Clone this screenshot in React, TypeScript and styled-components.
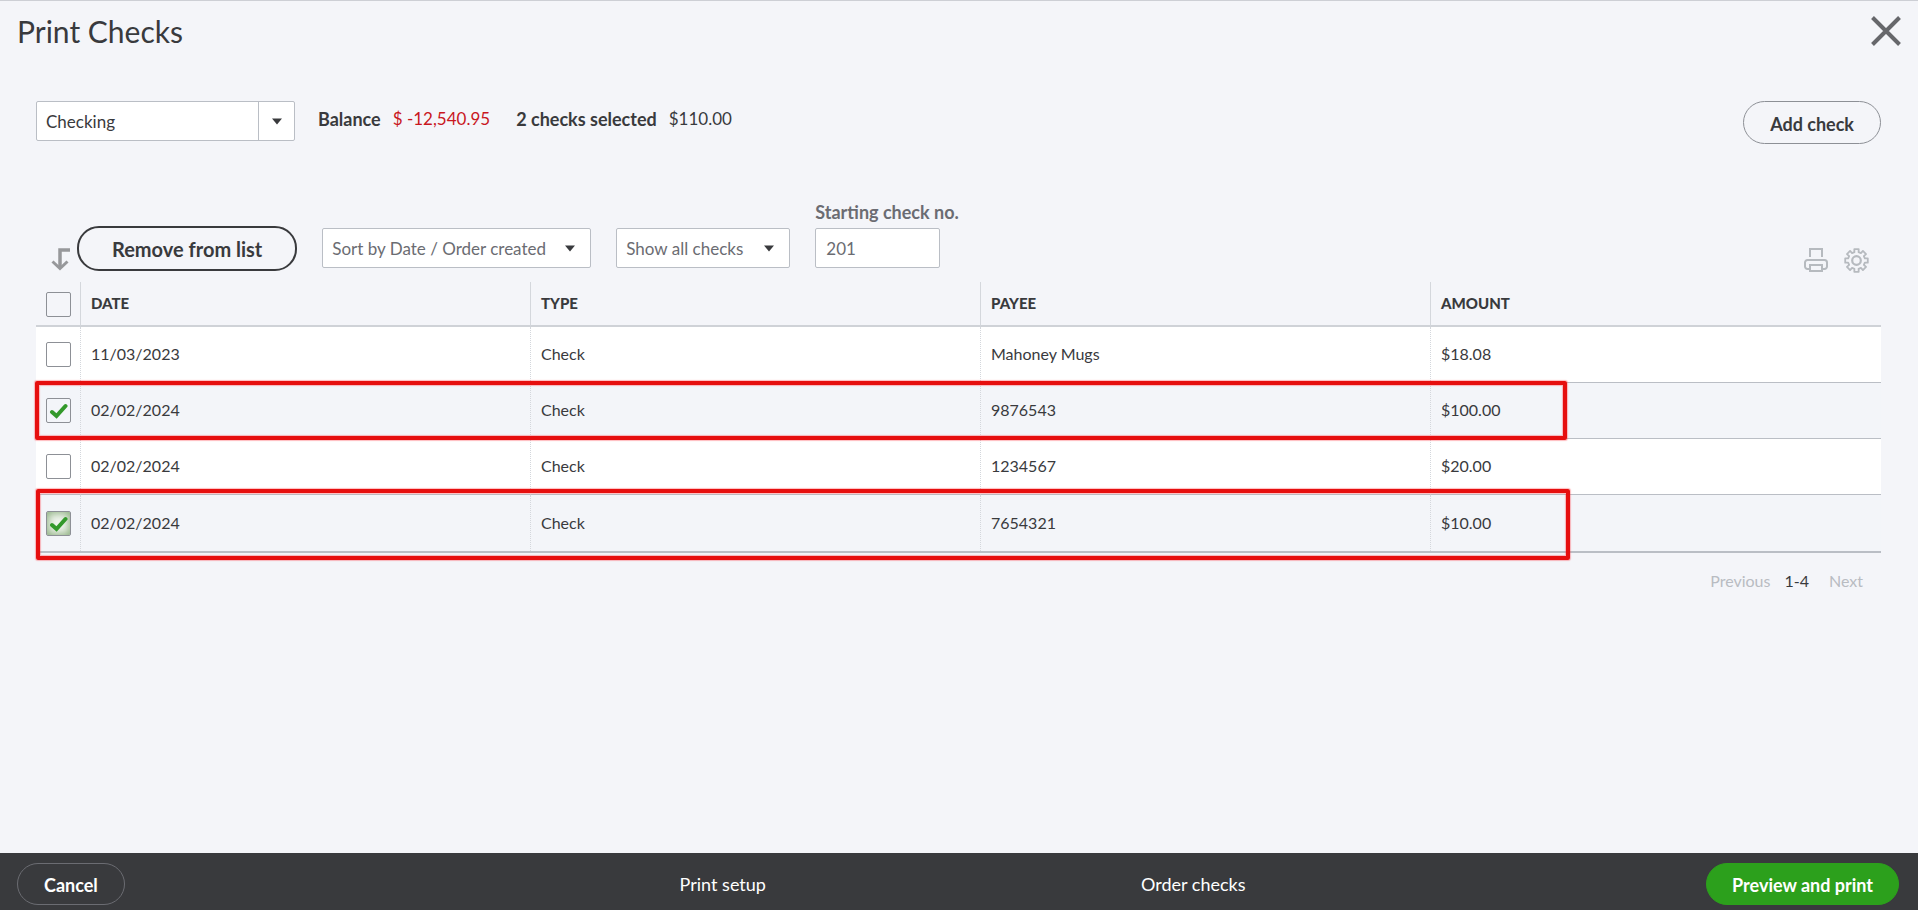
import React, { useState } from 'react';
import styled, { createGlobalStyle } from 'styled-components';

const ink = '#393a3d';
const muted = '#6b6c72';
const line = '#babec5';
const canvas = '#f4f5f9';

const GlobalStyle = createGlobalStyle`
  *, *::before, *::after { box-sizing: border-box; }
  body { margin: 0; background: ${canvas}; }
  body, button, input, select { font-family: Lato, "Liberation Sans", sans-serif; }
`;

const Page = styled.div`
  min-height: 100vh;
  display: flex;
  flex-direction: column;
  border-top: 1px solid #cdcfd5;
  background: ${canvas};
  color: ${ink};
  font-size: 17px;
  line-height: 24px;
`;

const Header = styled.header`
  display: flex;
  align-items: flex-start;
  justify-content: space-between;
  height: 100px;
  padding: 12px 16px 0 17px;
`;

const Title = styled.h1`
  margin: 0;
  font-size: 30px;
  font-weight: 400;
  line-height: 36px;
`;

const IconButton = styled.button<{ $tone?: string }>`
  display: block;
  padding: 0;
  border: 0;
  background: none;
  color: ${(p) => p.$tone ?? '#b6babf'};
  cursor: pointer;

  svg { display: block; }
`;

const Main = styled.main`
  flex: 1;
  padding: 0 37px 0 36px;
`;

const AccountBar = styled.section`
  display: flex;
  align-items: flex-start;
`;

const SelectBox = styled.span<{ $width: number }>`
  display: grid;
  width: ${(p) => p.$width}px;
  height: 40px;

  > * { grid-area: 1 / 1; }
`;

const Select = styled.select<{ $tone?: string }>`
  appearance: none;
  width: 100%;
  height: 40px;
  padding: 1px 36px 0 9px;
  border: 1px solid ${line};
  border-radius: 2px;
  background: #fff;
  color: ${(p) => p.$tone ?? muted};
  font-size: 17px;
`;

const CaretCell = styled.span<{ $divided?: boolean }>`
  display: grid;
  place-items: center;
  justify-self: end;
  width: ${(p) => (p.$divided ? 37 : 43)}px;
  border-left: ${(p) => (p.$divided ? `1px solid ${line}` : 'none')};
  margin: 1px 0;
  pointer-events: none;
`;

const Totals = styled.dl`
  display: flex;
  margin: 6px 0 0 23px;
`;

const Term = styled.dt`
  font-size: 18px;
  font-weight: 700;
`;

const Amount = styled.dd<{ $negative?: boolean }>`
  margin: 0 26px 0 12px;
  color: ${(p) => (p.$negative ? '#c9171e' : ink)};
`;

const PillButton = styled.button<{ $kind: 'outline' | 'strong' | 'dark' | 'primary' }>`
  height: ${(p) => (p.$kind === 'strong' ? 45 : p.$kind === 'outline' ? 43 : 42)}px;
  padding: ${(p) => ({ outline: '2px 26px 0', strong: '0 33px', dark: '2px 26px 0', primary: '2px 25px 0' })[p.$kind]};
  border: ${(p) =>
    ({ outline: '1px solid #8d9096', strong: `2px solid ${ink}`, dark: '1px solid #6b6c72', primary: '1px solid #2ca01c' })[p.$kind]};
  border-radius: 22px;
  background: ${(p) => (p.$kind === 'primary' ? '#2ca01c' : 'transparent')};
  color: ${(p) => (p.$kind === 'dark' || p.$kind === 'primary' ? '#fff' : ink)};
  font-size: ${(p) => (p.$kind === 'strong' ? 20 : 18)}px;
  font-weight: 700;
  white-space: nowrap;
  cursor: pointer;
`;

const PushRight = styled.div`
  margin-left: auto;
`;

const Toolbar = styled.section`
  display: flex;
  align-items: flex-end;
  margin-top: 56px;
  padding-bottom: 14px;
`;

const ArrowSlot = styled.span`
  width: 41px;
  margin-bottom: -3px;
  padding-left: 15px;

  svg { display: block; }
`;

const ListAction = styled.div`
  margin: 0 25px -3px 0;
`;

const FilterSlot = styled.div`
  margin-right: 25px;
  height: 40px;
`;

const Field = styled.label`
  display: flex;
  flex-direction: column;
  color: ${muted};
  font-size: 18px;
  font-weight: 700;
`;

const NumberBox = styled.input`
  width: 125px;
  height: 40px;
  margin-top: 4px;
  padding: 0 10px;
  border: 1px solid ${line};
  border-radius: 2px;
  background: #fff;
  color: ${muted};
  font-size: 17px;
`;

const Tools = styled.div`
  display: flex;
  gap: 15px;
  margin: 0 12px -5px auto;
`;

const TableArea = styled.div`
  position: relative;
`;

const Table = styled.table`
  width: 100%;
  table-layout: fixed;
  border-collapse: separate;
  border-spacing: 0;
  border-bottom: 2px solid ${line};
  font-size: 16px;
`;

const HeadCell = styled.th<{ $check?: boolean }>`
  width: ${(p) => (p.$check ? '45px' : 'auto')};
  height: 45px;
  padding: ${(p) => (p.$check ? '2px 0 0 10px' : '0 10px 2px')};
  border-right: 1px solid #d4d7dc;
  border-bottom: 2px solid #cfd2d7;
  text-align: left;
  font-size: 15px;
  font-weight: 900;

  &:last-child { border-right: 0; }
`;

const BodyRow = styled.tr<{ $selected: boolean }>`
  height: 56px;
  background: ${(p) => (p.$selected ? '#f3f5f9' : '#fff')};
`;

const Cell = styled.td<{ $check?: boolean }>`
  padding: ${(p) => (p.$check ? '0 0 0 10px' : '0 10px 2px')};
  border-right: 1px dotted #d4d7dc;
  border-bottom: 1px solid ${line};

  &:last-child { border-right: 0; }
  tr:last-child > & { border-bottom: 0; padding-bottom: 0; }
`;

const TickLabel = styled.label`
  display: grid;
  width: 25px;
  height: 25px;

  > * { grid-area: 1 / 1; }
  > svg { place-self: center; pointer-events: none; display: none; }
  > input:checked + svg { display: block; }
`;

const Tick = styled.input<{ $focused?: boolean }>`
  appearance: none;
  width: 25px;
  height: 25px;
  margin: 0;
  border: 1px solid #8d9096;
  border-radius: 2px;
  background: ${(p) => (p.$focused ? '#f0f4ee' : 'transparent')};
  box-shadow: ${(p) => (p.$focused ? 'inset 0 0 8px 1px #86ab78' : 'none')};
`;

const Highlight = styled.div<{ $top: number; $height: number; $left: number; $right: number }>`
  position: absolute;
  top: ${(p) => p.$top}px;
  height: ${(p) => p.$height}px;
  left: ${(p) => p.$left}px;
  right: ${(p) => p.$right}px;
  border: 4px solid #e60f0f;
  border-radius: 2px;
  box-shadow: 0 0 1px 1px rgba(255, 60, 70, 0.35), inset 0 0 1px 1px rgba(255, 60, 70, 0.35);
  pointer-events: none;
`;

const Pager = styled.nav`
  display: flex;
  justify-content: flex-end;
  margin-top: 16px;
  padding-right: 18px;
  font-size: 16px;
`;

const PageButton = styled.button`
  padding: 0;
  border: 0;
  background: none;
  color: #b9bcc2;
  font-size: 16px;
  line-height: 24px;
`;

const PageRange = styled.span`
  margin: 0 20px 0 14px;
`;

const Footer = styled.footer`
  display: grid;
  grid-template-columns: 1fr 50% 1fr;
  align-items: center;
  height: 57px;
  padding: 4px 19px 0 17px;
  background: ${ink};
`;

const FooterLinks = styled.div`
  display: grid;
  grid-template-columns: 1fr 1fr;
  justify-items: center;
`;

const FooterLink = styled.a`
  color: #fff;
  font-size: 18px;
  text-decoration: none;
`;

const FooterEnd = styled.div`
  justify-self: end;
`;

const Caret = () => (
  <svg width="10" height="7" viewBox="0 0 10 7" aria-hidden="true">
    <path d="M0 0.5H10L5 6.5Z" fill={ink} />
  </svg>
);

const CheckBox = ({ label, checked, focused, onChange }: { label: string; checked: boolean; focused?: boolean; onChange: () => void }) => (
  <TickLabel>
    <Tick type="checkbox" aria-label={label} checked={checked} $focused={focused && checked} onChange={onChange} />
    <svg width="19" height="17" viewBox="0 0 19 17" aria-hidden="true">
      <path d="M3 10L7.5 14L16.5 4" fill="none" stroke="#33992b" strokeWidth="4" strokeLinecap="round" />
    </svg>
  </TickLabel>
);

const GearIcon = () => {
  const teeth = 8;
  const points: string[] = [];
  const at = (deg: number, r: number) => {
    const a = (deg * Math.PI) / 180;
    return `${(12.5 + r * Math.cos(a)).toFixed(2)} ${(12.5 + r * Math.sin(a)).toFixed(2)}`;
  };
  for (let i = 0; i < teeth; i += 1) {
    const mid = (360 / teeth) * i - 90;
    points.push(at(mid - 14, 8.6), at(mid - 11, 11.5), at(mid + 11, 11.5), at(mid + 14, 8.6));
  }
  return (
    <svg width="25" height="25" viewBox="0 0 25 25" fill="none" stroke="currentColor" aria-hidden="true">
      <path d={`M${points.join('L')}Z`} strokeWidth="1.8" strokeLinejoin="round" />
      <circle cx="12.5" cy="12.5" r="4.3" strokeWidth="2.2" />
    </svg>
  );
};

const checks = [
  { date: '11/03/2023', payee: 'Mahoney Mugs', amount: '$18.08', selected: false },
  { date: '02/02/2024', payee: '9876543', amount: '$100.00', selected: true },
  { date: '02/02/2024', payee: '1234567', amount: '$20.00', selected: false },
  { date: '02/02/2024', payee: '7654321', amount: '$10.00', selected: true },
];

export default function App() {
  const [picked, setPicked] = useState(checks.map((c) => c.selected));
  const [startNo, setStartNo] = useState('201');
  const all = picked.every(Boolean);
  const toggle = (index: number) => setPicked(picked.map((p, i) => (i === index ? !p : p)));

  return (
    <Page>
      <GlobalStyle />
      <Header>
        <Title>Print Checks</Title>
        <IconButton type="button" aria-label="Close" $tone="#66676b">
          <svg width="32" height="36" viewBox="0 0 32 36" aria-hidden="true">
            <path d="M2.5 4.5L29.5 31.5M29.5 4.5L2.5 31.5" stroke="currentColor" strokeWidth="4" />
          </svg>
        </IconButton>
      </Header>

      <Main>
        <AccountBar>
          <SelectBox $width={259}>
            <Select aria-label="Account" $tone={ink}>
              <option>Checking</option>
            </Select>
            <CaretCell $divided><Caret /></CaretCell>
          </SelectBox>
          <Totals>
            <Term>Balance</Term>
            <Amount $negative>$ -12,540.95</Amount>
            <Term>2 checks selected</Term>
            <Amount>$110.00</Amount>
          </Totals>
          <PushRight>
            <PillButton type="button" $kind="outline">Add check</PillButton>
          </PushRight>
        </AccountBar>

        <Toolbar>
          <ArrowSlot>
            <svg width="20" height="24" viewBox="0 0 20 24" fill="none" stroke="#97989b" aria-hidden="true">
              <path d="M19 3H9V20" strokeWidth="3.5" />
              <path d="M1.5 14.5L9 21.5L16.5 14.5" strokeWidth="3" />
            </svg>
          </ArrowSlot>
          <ListAction>
            <PillButton type="button" $kind="strong">Remove from list</PillButton>
          </ListAction>
          <FilterSlot>
            <SelectBox $width={269}>
              <Select aria-label="Sort order">
                <option>Sort by Date / Order created</option>
              </Select>
              <CaretCell><Caret /></CaretCell>
            </SelectBox>
          </FilterSlot>
          <FilterSlot>
            <SelectBox $width={174}>
              <Select aria-label="Filter">
                <option>Show all checks</option>
              </Select>
              <CaretCell><Caret /></CaretCell>
            </SelectBox>
          </FilterSlot>
          <Field>
            Starting check no.
            <NumberBox type="text" value={startNo} onChange={(e) => setStartNo(e.target.value)} />
          </Field>
          <Tools>
            <IconButton type="button" aria-label="Print list">
              <svg width="25" height="25" viewBox="0 0 25 25" fill="none" stroke="currentColor" strokeWidth="2" aria-hidden="true">
                <path d="M6 9V1H18V9" />
                <path d="M5 21H3.5A2.5 2.5 0 0 1 1 18.500V14.500A2.500 2.500 0 0 1 3.500 12H20.500A2.500 2.500 0 0 1 23 14.500V18.500A2.500 2.500 0 0 1 20.500 21H19" />
                <path d="M6 17H18V23H6Z" />
              </svg>
            </IconButton>
            <IconButton type="button" aria-label="Settings"><GearIcon /></IconButton>
          </Tools>
        </Toolbar>

        <TableArea>
          <Table>
            <thead>
              <tr>
                <HeadCell $check>
                  <CheckBox label="Select all" checked={all} onChange={() => setPicked(picked.map(() => !all))} />
                </HeadCell>
                <HeadCell>DATE</HeadCell>
                <HeadCell>TYPE</HeadCell>
                <HeadCell>PAYEE</HeadCell>
                <HeadCell>AMOUNT</HeadCell>
              </tr>
            </thead>
            <tbody>
              {checks.map((check, i) => (
                <BodyRow key={check.payee} $selected={picked[i]}>
                  <Cell $check>
                    <CheckBox
                      label={`Select ${check.payee}`}
                      checked={picked[i]}
                      focused={i === checks.length - 1}
                      onChange={() => toggle(i)}
                    />
                  </Cell>
                  <Cell>{check.date}</Cell>
                  <Cell>Check</Cell>
                  <Cell>{check.payee}</Cell>
                  <Cell>{check.amount}</Cell>
                </BodyRow>
              ))}
            </tbody>
          </Table>
          <Highlight $top={99} $height={59} $left={-1} $right={314} />
          <Highlight $top={207} $height={71} $left={0} $right={311} />
        </TableArea>

        <Pager aria-label="Pages">
          <PageButton type="button">Previous</PageButton>
          <PageRange>1-4</PageRange>
          <PageButton type="button">Next</PageButton>
        </Pager>
      </Main>

      <Footer>
        <div>
          <PillButton type="button" $kind="dark">Cancel</PillButton>
        </div>
        <FooterLinks>
          <FooterLink href="#setup">Print setup</FooterLink>
          <FooterLink href="#order">Order checks</FooterLink>
        </FooterLinks>
        <FooterEnd>
          <PillButton type="button" $kind="primary">Preview and print</PillButton>
        </FooterEnd>
      </Footer>
    </Page>
  );
}
